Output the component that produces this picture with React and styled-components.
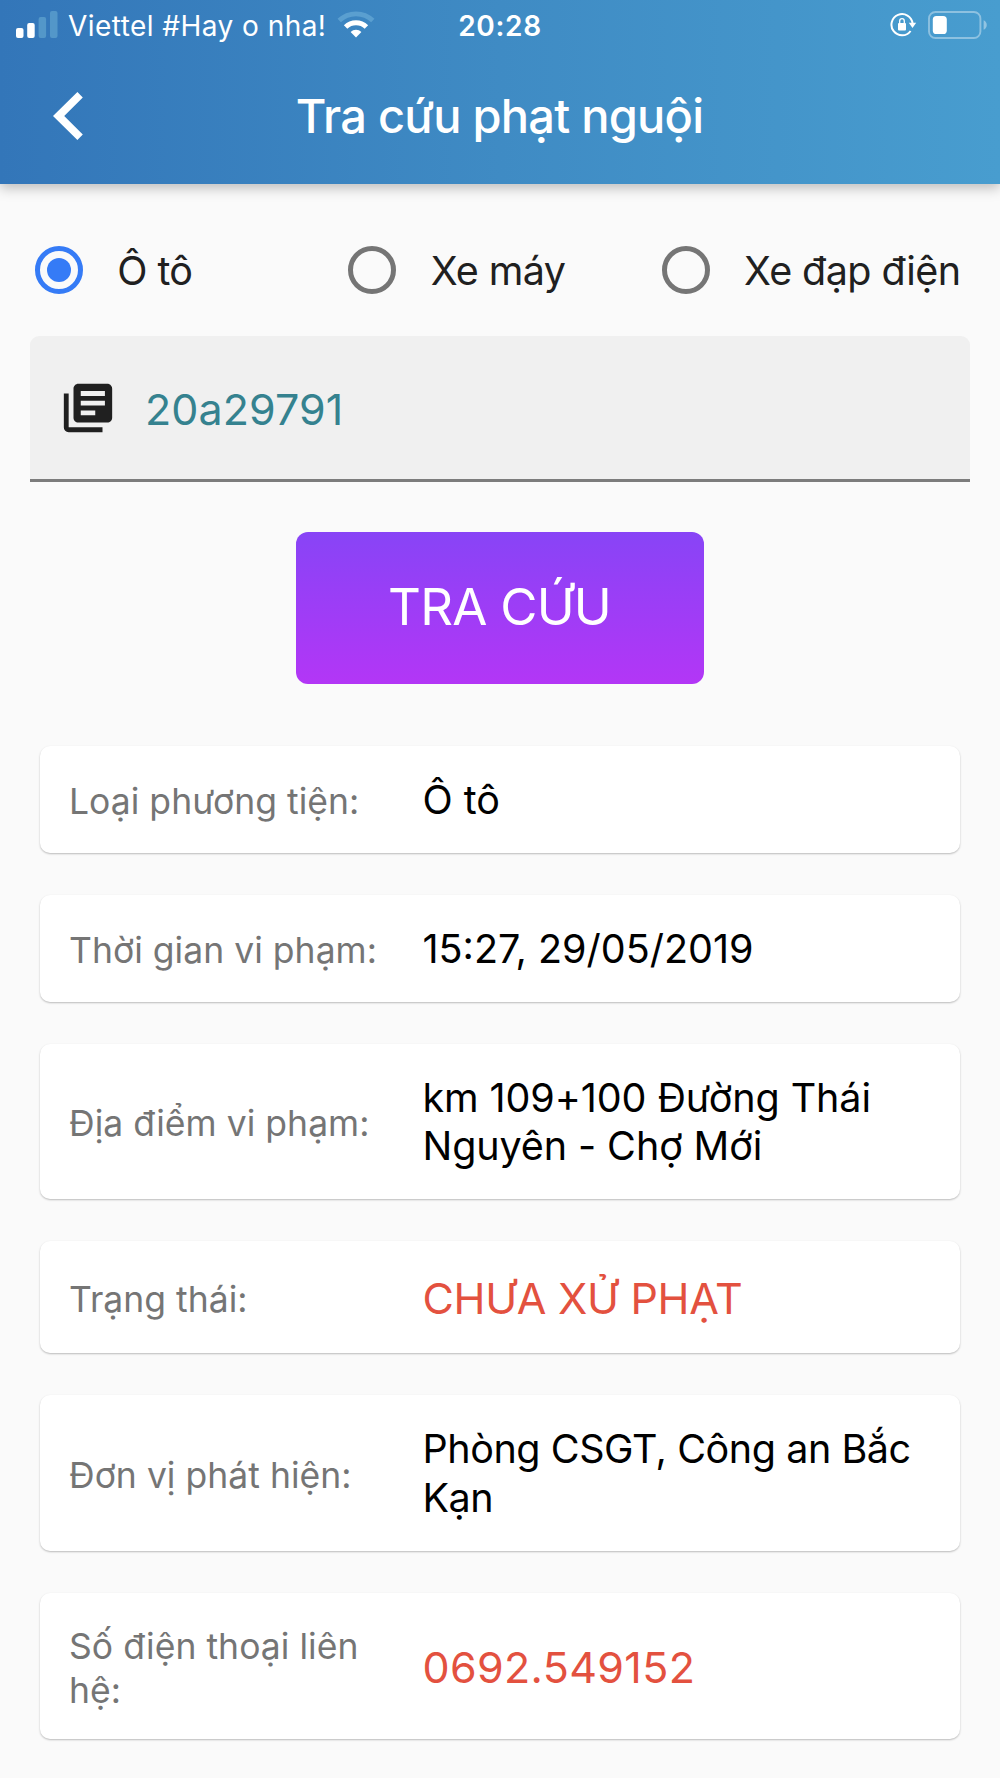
import React, { useState } from 'react'
import styled, { createGlobalStyle } from 'styled-components'
import { MdLibraryBooks } from 'react-icons/md'

const vehicles = ['Ô tô', 'Xe máy', 'Xe đạp điện']

const details = [
    { label: 'Loại phương tiện:', value: 'Ô tô', height: 107 },
    { label: 'Thời gian vi phạm:', value: '15:27, 29/05/2019', height: 107 },
    { label: 'Địa điểm vi phạm:', value: 'km 109+100 Đường Thái Nguyên - Chợ Mới', height: 155, spacing: -0.1 },
    { label: 'Trạng thái:', value: 'CHƯA XỬ PHẠT', height: 112, alert: true, spacing: -0.3 },
    { label: 'Đơn vị phát hiện:', value: 'Phòng CSGT, Công an Bắc Kạn', height: 156, spacing: -0.45 },
    { label: 'Số điện thoại liên hệ:', value: '0692.549152', height: 146, alert: true, spacing: 0.35 },
]

const SignalIcon = () => (
    <svg width="42" height="27" viewBox="0 0 42 27" fill="#fff">
        <rect x="0" y="17" width="7.5" height="10" rx="2" />
        <rect x="11.2" y="12" width="7.5" height="15" rx="2" />
        <rect x="22.6" y="6" width="7.5" height="21" rx="2" fill="#5397c9" />
        <rect x="34" y="0" width="7.5" height="27" rx="2" fill="#5397c9" />
    </svg>
)

const WifiIcon = () => (
    <svg width="38" height="27" viewBox="0 0 38 27" fill="none" stroke="#fff">
        <path d="M2.2 9.6a24.2 24.2 0 0 1 33.6 0" strokeWidth="4.8" stroke="#5a9fd0" />
        <path d="M8.6 16a15 15 0 0 1 20.8 0" strokeWidth="5" />
        <path d="M13.6 21a7.8 7.8 0 0 1 10.8 0L19 26.4z" fill="#fff" stroke="none" />
    </svg>
)

const RotationLockIcon = () => (
    <svg width="28" height="26" viewBox="0 0 28 26" fill="none" stroke="#fff">
        <path d="M22.6 11.5A10.6 10.6 0 1 0 20.6 19" strokeWidth="2" />
        <path d="M18.8 10.8h7.4l-3.7 5.2z" fill="#fff" stroke="none" />
        <rect x="8" y="11" width="8" height="7.4" rx="1" fill="#fff" stroke="none" />
        <path d="M9.7 11.5V9a2.3 2.3 0 0 1 4.6 0v2.5" strokeWidth="1.3" />
    </svg>
)

const BatteryIcon = () => (
    <svg width="60" height="28" viewBox="0 0 60 28">
        <rect x="1" y="1" width="51.4" height="26" rx="6.5" fill="none" stroke="#fff" strokeWidth="1.9" opacity="0.38" />
        <rect x="4.8" y="5" width="14" height="18" rx="3.6" fill="#fff" />
        <path d="M55.6 9.2c4.2 1.8 4.2 7.8 0 9.6z" fill="#fff" opacity="0.4" />
    </svg>
)

const App = () => {
    const [vehicle, setVehicle] = useState('Ô tô')
    const [plate, setPlate] = useState('20a29791')

    return (
        <Page>
            <GlobalStyle />
            <Header>
                <StatusBar>
                    <Carrier>
                        <SignalIcon />
                        <CarrierName>Viettel #Hay o nha!</CarrierName>
                        <WifiIcon />
                    </Carrier>
                    <Clock>20:28</Clock>
                    <StatusIcons>
                        <RotationLockIcon />
                        <BatteryIcon />
                    </StatusIcons>
                </StatusBar>
                <Toolbar>
                    <BackButton aria-label="Quay lại">
                        <svg width="30" height="48" viewBox="0 0 30 48">
                            <path d="M24.4 0L0 24l24.4 24 5.4-5.4L11.2 24 29.8 5.4z" fill="#fff" />
                        </svg>
                    </BackButton>
                    <Title>Tra cứu phạt nguội</Title>
                </Toolbar>
            </Header>

            <Content>
                <Vehicles>
                    {vehicles.map((x) => (
                        <Vehicle key={x} onClick={() => setVehicle(x)}>
                            <Radio $checked={vehicle === x} />
                            <VehicleName>{x}</VehicleName>
                        </Vehicle>
                    ))}
                </Vehicles>

                <Field>
                    <MdLibraryBooks className="icon" />
                    <PlateInput value={plate} onChange={(e) => setPlate(e.target.value)} spellCheck={false} />
                </Field>

                <SearchButton>TRA CỨU</SearchButton>

                <Details>
                    {details.map((x) => (
                        <Card key={x.label} $height={x.height}>
                            <Label>{x.label}</Label>
                            <Value $alert={x.alert} $spacing={x.spacing}>{x.value}</Value>
                        </Card>
                    ))}
                </Details>
            </Content>
        </Page>
    )
}

const GlobalStyle = createGlobalStyle`
* {
    box-sizing: border-box;
}

body {
    margin: 0;
    background-color: #fafafa;
    font-family: Inter, Roboto, sans-serif;
}

button, input {
    font-family: inherit;
}
`;

const Page = styled.div`
width: 1000px;
height: 1778px;
overflow: hidden;
background-color: #fafafa;
`;

const Header = styled.header`
height: 183.5px;
color: #fff;
background: linear-gradient(90deg, #3376b9 0%, #3f8bc4 50%, #489dcf 100%);
box-shadow: 0 4px 12px rgba(0, 0, 0, 0.25);
`;

const StatusBar = styled.div`
height: 50px;
padding: 0 12px 0 16px;
display: grid;
grid-template-columns: 1fr auto 1fr;
align-items: center;
`;

const Carrier = styled.div`
display: flex;
align-items: center;

svg {
    display: block;
    flex: none;
    margin-bottom: 2px;
}
`;

const CarrierName = styled.span`
margin: 0 11px 0 10px;
padding-top: 1px;
font-size: 28px;
line-height: 34px;
letter-spacing: 0.45px;
white-space: nowrap;
`;

const Clock = styled.span`
padding: 1px 4px 0 0;
font-size: 28px;
line-height: 34px;
font-weight: 600;
letter-spacing: 0.7px;
`;

const StatusIcons = styled.div`
display: flex;
justify-content: flex-end;
align-items: center;
gap: 10px;
`;

const Toolbar = styled.div`
height: 132px;
padding: 0 53px;
display: grid;
grid-template-columns: 60px 1fr 60px;
align-items: center;
`;

const BackButton = styled.button`
padding: 0;
border: 0;
background-color: transparent;
cursor: pointer;

svg {
    display: block;
}
`;

const Title = styled.h1`
margin: 0;
padding-right: 1px;
text-align: center;
font-size: 47px;
line-height: 58px;
font-weight: 500;
letter-spacing: -0.77px;
white-space: nowrap;
`;

const Content = styled.main`
padding: 0 30px;
`;

const Vehicles = styled.div`
height: 152.5px;
padding-top: 20px;
display: grid;
grid-template-columns: repeat(3, 1fr);
align-items: center;
`;

const Vehicle = styled.div`
padding-left: 5px;
display: flex;
align-items: center;
gap: 34.3px;
cursor: pointer;
`;

const VehicleName = styled.span`
padding-top: 2px;
color: #202020;
font-size: 39.5px;
line-height: 48px;
letter-spacing: -0.6px;
white-space: nowrap;
`;

const Radio = styled.span`
flex: none;
width: 48px;
height: 48px;
border: 5px solid ${(props) => (props.$checked ? '#357bf6' : '#757575')};
border-radius: 50%;
display: flex;
align-items: center;
justify-content: center;

&::after {
    content: '';
    width: 24px;
    height: 24px;
    border-radius: 50%;
    background-color: ${(props) => (props.$checked ? '#357bf6' : 'transparent')};
}
`;

const Field = styled.div`
height: 146px;
padding-left: 29px;
border-bottom: 3px solid #7c7c7c;
border-radius: 9px 9px 0 0;
background-color: #f0f0f0;
display: flex;
align-items: center;

.icon {
    flex: none;
    width: 58px;
    height: 58px;
    color: #202020;
}
`;

const PlateInput = styled.input`
flex: 1;
margin-left: 28px;
padding: 2px 0 0;
border: 0;
outline: 0;
background-color: transparent;
color: #35828f;
font-size: 43px;
letter-spacing: 0.1px;
`;

const SearchButton = styled.button`
display: block;
width: 408px;
height: 152px;
margin: 50px auto 62px;
padding: 0 1px 2px 0;
border: 0;
border-radius: 12px;
background: linear-gradient(180deg, #8844f6 0%, #b336f6 100%);
color: #fff;
font-size: 51px;
line-height: 62px;
letter-spacing: -0.75px;
cursor: pointer;
`;

const Details = styled.div`
padding: 0 10px;
display: flex;
flex-direction: column;
gap: 42px;
`;

const Card = styled.div`
height: ${(props) => props.$height}px;
padding: 0 29px;
border-radius: 10px;
background-color: #fff;
box-shadow: 0 1px 2px rgba(0, 0, 0, 0.26);
display: grid;
grid-template-columns: 353.5px 1fr;
align-items: center;
`;

const Label = styled.div`
max-width: 320px;
padding-top: 5px;
color: #757575;
font-size: 35.5px;
line-height: 44px;
letter-spacing: 0.03px;
`;

const Value = styled.div`
padding-top: ${(props) => (props.$alert ? 3 : 1)}px;
color: ${(props) => (props.$alert ? '#e3513f' : '#000')};
font-size: ${(props) => (props.$alert ? 43 : 39.5)}px;
line-height: 48.5px;
letter-spacing: ${(props) => props.$spacing || 0}px;
`;

export default App
